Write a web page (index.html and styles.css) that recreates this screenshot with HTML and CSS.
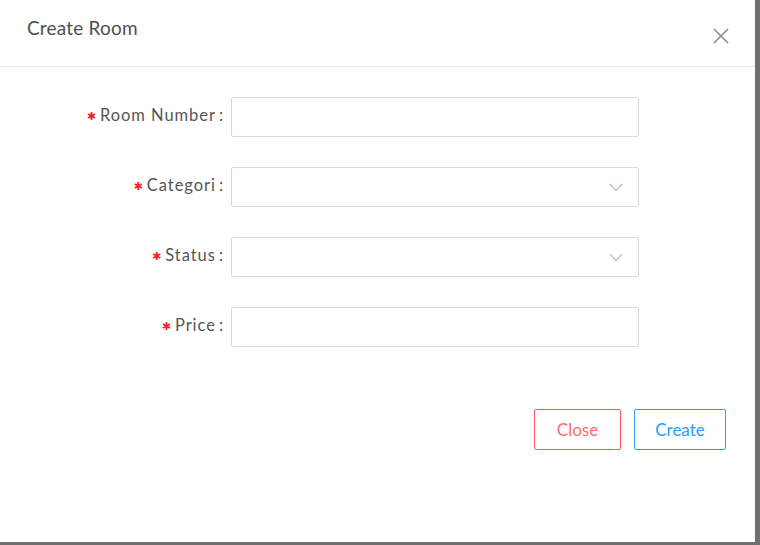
FILE: index.html
```html
<!DOCTYPE html>
<html>
<head>
<meta charset="utf-8">
<link rel="stylesheet" href="styles.css">
</head>
<body>
<div class="modal">
  <div class="header">
    <div class="title">Create Room</div>
    <div class="close-x">
      <svg width="16" height="16" viewBox="0 0 16 16"><path d="M1 1L15 15M15 1L1 15" stroke="#8c8c8c" stroke-width="1.6" fill="none"/></svg>
    </div>
  </div>
  <div class="body">
    <div class="row">
      <div class="label"><span class="req">✱</span>Room Number<span class="colon">:</span></div>
      <div class="input"></div>
    </div>
    <div class="row">
      <div class="label"><span class="req">✱</span>Categori<span class="colon">:</span></div>
      <div class="input select">
        <svg width="14" height="9" viewBox="0 0 14 9"><path d="M1 1L7 7.5L13 1" stroke="#bfbfbf" stroke-width="1.3" fill="none"/></svg>
      </div>
    </div>
    <div class="row">
      <div class="label"><span class="req">✱</span>Status<span class="colon">:</span></div>
      <div class="input select">
        <svg width="14" height="9" viewBox="0 0 14 9"><path d="M1 1L7 7.5L13 1" stroke="#bfbfbf" stroke-width="1.3" fill="none"/></svg>
      </div>
    </div>
    <div class="row">
      <div class="label"><span class="req">✱</span>Price<span class="colon">:</span></div>
      <div class="input"></div>
    </div>
  </div>
  <div class="footer">
    <button class="btn btn-close">Close</button>
    <button class="btn btn-create">Create</button>
  </div>
</div>
</body>
</html>
```
FILE: styles.css
```css
html, body {
  margin: 0;
  padding: 0;
  height: 545px;
  overflow: hidden;
}
body {
  background: #6f6f6f;
  font-family: "Lato", "Open Sans", sans-serif;
}
.modal {
  width: 755px;
  height: 542px;
  background: #ffffff;
  box-sizing: border-box;
}
.header {
  height: 67px;
  border-bottom: 1px solid #ececec;
  box-sizing: border-box;
  display: flex;
  justify-content: space-between;
  align-items: flex-start;
  padding: 0 26px 0 27px;
}
.title {
  font-size: 19px;
  color: #505050;
  margin-top: 16px;
  letter-spacing: 0.2px;
}
.close-x {
  margin-top: 28px;
  width: 16px;
  height: 16px;
}
.close-x svg { display: block; }
.body {
  padding-top: 30px;
  display: flex;
  flex-direction: column;
  gap: 30px;
}
.row {
  display: flex;
  align-items: center;
  height: 40px;
}
.label {
  width: 231px;
  box-sizing: border-box;
  padding-right: 8px;
  text-align: right;
  font-size: 16.5px;
  letter-spacing: 0.95px;
  color: #555555;
  white-space: nowrap;
  margin-top: -4px;
}
.req {
  color: #f5222d;
  font-family: "DejaVu Sans", sans-serif;
  font-size: 11px;
  margin-right: 4px;
  letter-spacing: 0;
  position: relative;
  top: -1px;
}
.colon {
  margin-left: 3px;
  letter-spacing: 0;
}
.input {
  width: 408px;
  height: 40px;
  border: 1px solid #d9d9d9;
  border-radius: 2px;
  box-sizing: border-box;
}
.select {
  display: flex;
  justify-content: flex-end;
  align-items: center;
  padding-right: 15px;
}
.select svg { display: block; }
.footer {
  display: flex;
  justify-content: flex-end;
  gap: 13px;
  padding-right: 29px;
  margin-top: 62px;
}
.btn {
  height: 41px;
  background: #fff;
  border-radius: 2px;
  font-family: "Lato", "Open Sans", sans-serif;
  font-size: 17px;
  padding: 0;
  cursor: pointer;
}
.btn-close {
  width: 87px;
  border: 1.5px solid #ff5a5f;
  color: #ff6b6e;
}
.btn-create {
  width: 92px;
  border: 1.5px solid #2a9df4;
  color: #2a9df4;
}
```
